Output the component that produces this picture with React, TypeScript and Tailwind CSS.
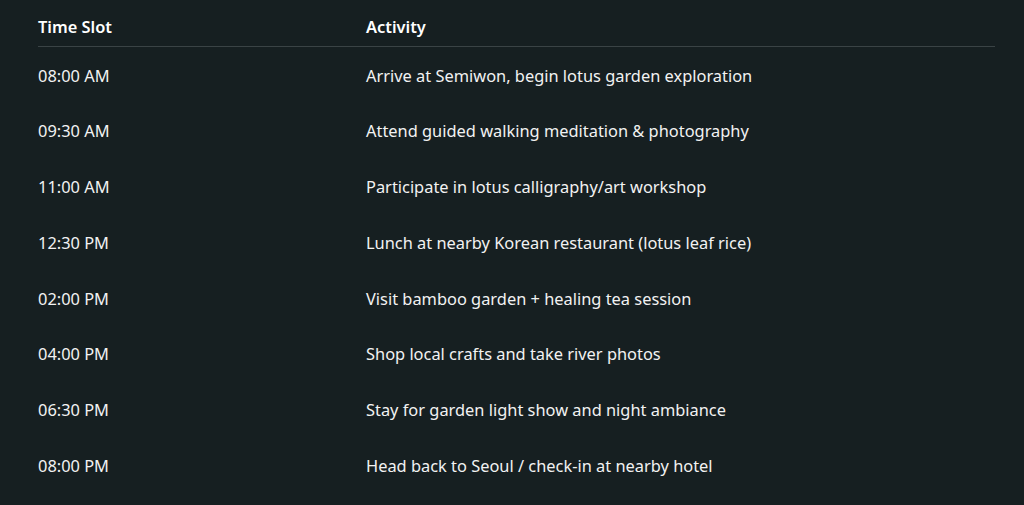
const ROWS: [string, string][] = [
  ["08:00 AM", "Arrive at Semiwon, begin lotus garden exploration"],
  ["09:30 AM", "Attend guided walking meditation & photography"],
  ["11:00 AM", "Participate in lotus calligraphy/art workshop"],
  ["12:30 PM", "Lunch at nearby Korean restaurant (lotus leaf rice)"],
  ["02:00 PM", "Visit bamboo garden + healing tea session"],
  ["04:00 PM", "Shop local crafts and take river photos"],
  ["06:30 PM", "Stay for garden light show and night ambiance"],
  ["08:00 PM", "Head back to Seoul / check-in at nearby hotel"],
];

export default function App() {
  return (
    <div className="h-[505px] w-full overflow-hidden bg-[#161f21] pl-[38px] pr-[29px] pt-[15px] font-['Segoe_UI','Noto_Sans',sans-serif] text-[16.4px] leading-6 text-[#f2f2f2]">
      <div className="grid grid-cols-[328px_1fr] border-b border-[#3a4345] pb-[7px] font-semibold text-white">
        <div>Time Slot</div>
        <div>Activity</div>
      </div>
      {ROWS.map(([time, activity]) => (
        <div key={time} className="grid grid-cols-[328px_1fr] pt-[16.5px] pb-[15.3px]">
          <div>{time}</div>
          <div>{activity}</div>
        </div>
      ))}
    </div>
  );
}
